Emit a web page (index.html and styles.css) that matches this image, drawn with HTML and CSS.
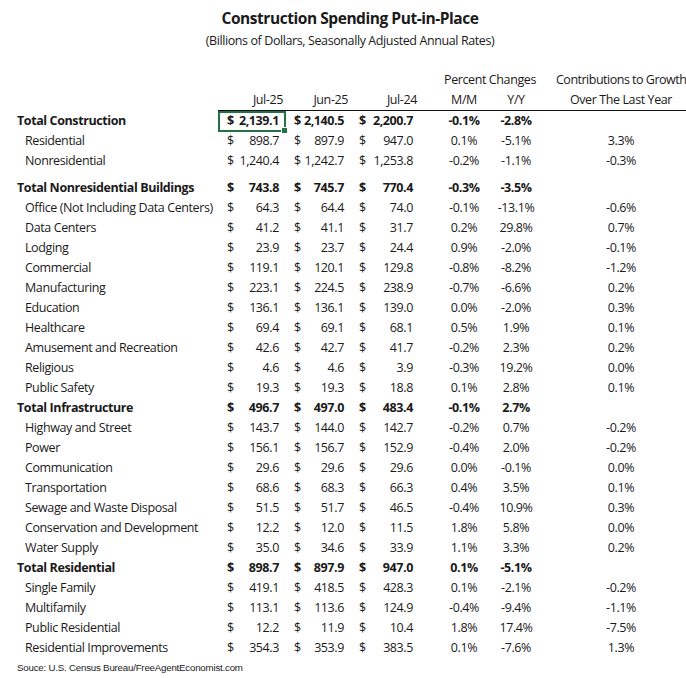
FILE: index.html
```html
<!DOCTYPE html>
<html>
<head>
<meta charset="utf-8">
<link rel="stylesheet" href="styles.css">
</head>
<body>
<h1 class="title">Construction Spending Put-in-Place</h1>
<p class="subtitle">(Billions of Dollars, Seasonally Adjusted Annual Rates)</p>
<table class="data">
  <colgroup>
    <col class="c-lbl"><col class="c-a"><col class="c-b"><col class="c-c"><col class="c-g1"><col class="c-mm"><col class="c-yy"><col class="c-g2"><col class="c-ct">
  </colgroup>
  <thead>
    <tr class="h1">
      <th></th><th></th><th></th><th></th><th></th>
      <th colspan="2" class="pc">Percent Changes</th>
      <th></th>
      <th class="ct-top">Contributions to Growth</th>
    </tr>
    <tr class="h2">
      <th class="nl"></th>
      <th class="hd">Jul-25</th><th class="hd">Jun-25</th><th class="hd">Jul-24</th>
      <th></th><th class="p">M/M</th><th class="p">Y/Y</th><th></th><th class="p">Over The Last Year</th>
    </tr>
  </thead>
  <tbody>
    <tr class="tot"><td class="lbl">Total Construction</td><td class="sel"><div class="m"><span>$</span><span>2,139.1</span></div></td><td><div class="m"><span>$</span><span>2,140.5</span></div></td><td><div class="m"><span>$</span><span>2,200.7</span></div></td><td></td><td class="p">-0.1%</td><td class="p">-2.8%</td><td></td><td class="p"></td></tr>
    <tr><td class="lbl">Residential</td><td><div class="m"><span>$</span><span>898.7</span></div></td><td><div class="m"><span>$</span><span>897.9</span></div></td><td><div class="m"><span>$</span><span>947.0</span></div></td><td></td><td class="p">0.1%</td><td class="p">-5.1%</td><td></td><td class="p">3.3%</td></tr>
    <tr><td class="lbl">Nonresidential</td><td><div class="m"><span>$</span><span>1,240.4</span></div></td><td><div class="m"><span>$</span><span>1,242.7</span></div></td><td><div class="m"><span>$</span><span>1,253.8</span></div></td><td></td><td class="p">-0.2%</td><td class="p">-1.1%</td><td></td><td class="p">-0.3%</td></tr>
    <tr class="spacer"><td colspan="9"></td></tr>
    <tr class="tot"><td class="lbl">Total Nonresidential Buildings</td><td><div class="m"><span>$</span><span>743.8</span></div></td><td><div class="m"><span>$</span><span>745.7</span></div></td><td><div class="m"><span>$</span><span>770.4</span></div></td><td></td><td class="p">-0.3%</td><td class="p">-3.5%</td><td></td><td class="p"></td></tr>
    <tr><td class="lbl">Office (Not Including Data Centers)</td><td><div class="m"><span>$</span><span>64.3</span></div></td><td><div class="m"><span>$</span><span>64.4</span></div></td><td><div class="m"><span>$</span><span>74.0</span></div></td><td></td><td class="p">-0.1%</td><td class="p">-13.1%</td><td></td><td class="p">-0.6%</td></tr>
    <tr><td class="lbl">Data Centers</td><td><div class="m"><span>$</span><span>41.2</span></div></td><td><div class="m"><span>$</span><span>41.1</span></div></td><td><div class="m"><span>$</span><span>31.7</span></div></td><td></td><td class="p">0.2%</td><td class="p">29.8%</td><td></td><td class="p">0.7%</td></tr>
    <tr><td class="lbl">Lodging</td><td><div class="m"><span>$</span><span>23.9</span></div></td><td><div class="m"><span>$</span><span>23.7</span></div></td><td><div class="m"><span>$</span><span>24.4</span></div></td><td></td><td class="p">0.9%</td><td class="p">-2.0%</td><td></td><td class="p">-0.1%</td></tr>
    <tr><td class="lbl">Commercial</td><td><div class="m"><span>$</span><span>119.1</span></div></td><td><div class="m"><span>$</span><span>120.1</span></div></td><td><div class="m"><span>$</span><span>129.8</span></div></td><td></td><td class="p">-0.8%</td><td class="p">-8.2%</td><td></td><td class="p">-1.2%</td></tr>
    <tr><td class="lbl">Manufacturing</td><td><div class="m"><span>$</span><span>223.1</span></div></td><td><div class="m"><span>$</span><span>224.5</span></div></td><td><div class="m"><span>$</span><span>238.9</span></div></td><td></td><td class="p">-0.7%</td><td class="p">-6.6%</td><td></td><td class="p">0.2%</td></tr>
    <tr><td class="lbl">Education</td><td><div class="m"><span>$</span><span>136.1</span></div></td><td><div class="m"><span>$</span><span>136.1</span></div></td><td><div class="m"><span>$</span><span>139.0</span></div></td><td></td><td class="p">0.0%</td><td class="p">-2.0%</td><td></td><td class="p">0.3%</td></tr>
    <tr><td class="lbl">Healthcare</td><td><div class="m"><span>$</span><span>69.4</span></div></td><td><div class="m"><span>$</span><span>69.1</span></div></td><td><div class="m"><span>$</span><span>68.1</span></div></td><td></td><td class="p">0.5%</td><td class="p">1.9%</td><td></td><td class="p">0.1%</td></tr>
    <tr><td class="lbl">Amusement and Recreation</td><td><div class="m"><span>$</span><span>42.6</span></div></td><td><div class="m"><span>$</span><span>42.7</span></div></td><td><div class="m"><span>$</span><span>41.7</span></div></td><td></td><td class="p">-0.2%</td><td class="p">2.3%</td><td></td><td class="p">0.2%</td></tr>
    <tr><td class="lbl">Religious</td><td><div class="m"><span>$</span><span>4.6</span></div></td><td><div class="m"><span>$</span><span>4.6</span></div></td><td><div class="m"><span>$</span><span>3.9</span></div></td><td></td><td class="p">-0.3%</td><td class="p">19.2%</td><td></td><td class="p">0.0%</td></tr>
    <tr><td class="lbl">Public Safety</td><td><div class="m"><span>$</span><span>19.3</span></div></td><td><div class="m"><span>$</span><span>19.3</span></div></td><td><div class="m"><span>$</span><span>18.8</span></div></td><td></td><td class="p">0.1%</td><td class="p">2.8%</td><td></td><td class="p">0.1%</td></tr>
    <tr class="tot"><td class="lbl">Total Infrastructure</td><td><div class="m"><span>$</span><span>496.7</span></div></td><td><div class="m"><span>$</span><span>497.0</span></div></td><td><div class="m"><span>$</span><span>483.4</span></div></td><td></td><td class="p">-0.1%</td><td class="p">2.7%</td><td></td><td class="p"></td></tr>
    <tr><td class="lbl">Highway and Street</td><td><div class="m"><span>$</span><span>143.7</span></div></td><td><div class="m"><span>$</span><span>144.0</span></div></td><td><div class="m"><span>$</span><span>142.7</span></div></td><td></td><td class="p">-0.2%</td><td class="p">0.7%</td><td></td><td class="p">-0.2%</td></tr>
    <tr><td class="lbl">Power</td><td><div class="m"><span>$</span><span>156.1</span></div></td><td><div class="m"><span>$</span><span>156.7</span></div></td><td><div class="m"><span>$</span><span>152.9</span></div></td><td></td><td class="p">-0.4%</td><td class="p">2.0%</td><td></td><td class="p">-0.2%</td></tr>
    <tr><td class="lbl">Communication</td><td><div class="m"><span>$</span><span>29.6</span></div></td><td><div class="m"><span>$</span><span>29.6</span></div></td><td><div class="m"><span>$</span><span>29.6</span></div></td><td></td><td class="p">0.0%</td><td class="p">-0.1%</td><td></td><td class="p">0.0%</td></tr>
    <tr><td class="lbl">Transportation</td><td><div class="m"><span>$</span><span>68.6</span></div></td><td><div class="m"><span>$</span><span>68.3</span></div></td><td><div class="m"><span>$</span><span>66.3</span></div></td><td></td><td class="p">0.4%</td><td class="p">3.5%</td><td></td><td class="p">0.1%</td></tr>
    <tr><td class="lbl">Sewage and Waste Disposal</td><td><div class="m"><span>$</span><span>51.5</span></div></td><td><div class="m"><span>$</span><span>51.7</span></div></td><td><div class="m"><span>$</span><span>46.5</span></div></td><td></td><td class="p">-0.4%</td><td class="p">10.9%</td><td></td><td class="p">0.3%</td></tr>
    <tr><td class="lbl">Conservation and Development</td><td><div class="m"><span>$</span><span>12.2</span></div></td><td><div class="m"><span>$</span><span>12.0</span></div></td><td><div class="m"><span>$</span><span>11.5</span></div></td><td></td><td class="p">1.8%</td><td class="p">5.8%</td><td></td><td class="p">0.0%</td></tr>
    <tr><td class="lbl">Water Supply</td><td><div class="m"><span>$</span><span>35.0</span></div></td><td><div class="m"><span>$</span><span>34.6</span></div></td><td><div class="m"><span>$</span><span>33.9</span></div></td><td></td><td class="p">1.1%</td><td class="p">3.3%</td><td></td><td class="p">0.2%</td></tr>
    <tr class="tot"><td class="lbl">Total Residential</td><td><div class="m"><span>$</span><span>898.7</span></div></td><td><div class="m"><span>$</span><span>897.9</span></div></td><td><div class="m"><span>$</span><span>947.0</span></div></td><td></td><td class="p">0.1%</td><td class="p">-5.1%</td><td></td><td class="p"></td></tr>
    <tr><td class="lbl">Single Family</td><td><div class="m"><span>$</span><span>419.1</span></div></td><td><div class="m"><span>$</span><span>418.5</span></div></td><td><div class="m"><span>$</span><span>428.3</span></div></td><td></td><td class="p">0.1%</td><td class="p">-2.1%</td><td></td><td class="p">-0.2%</td></tr>
    <tr><td class="lbl">Multifamily</td><td><div class="m"><span>$</span><span>113.1</span></div></td><td><div class="m"><span>$</span><span>113.6</span></div></td><td><div class="m"><span>$</span><span>124.9</span></div></td><td></td><td class="p">-0.4%</td><td class="p">-9.4%</td><td></td><td class="p">-1.1%</td></tr>
    <tr><td class="lbl">Public Residential</td><td><div class="m"><span>$</span><span>12.2</span></div></td><td><div class="m"><span>$</span><span>11.9</span></div></td><td><div class="m"><span>$</span><span>10.4</span></div></td><td></td><td class="p">1.8%</td><td class="p">17.4%</td><td></td><td class="p">-7.5%</td></tr>
    <tr><td class="lbl">Residential Improvements</td><td><div class="m"><span>$</span><span>354.3</span></div></td><td><div class="m"><span>$</span><span>353.9</span></div></td><td><div class="m"><span>$</span><span>383.5</span></div></td><td></td><td class="p">0.1%</td><td class="p">-7.6%</td><td></td><td class="p">1.3%</td></tr>
  </tbody>
</table>
<p class="src">Souce: U.S. Census Bureau/FreeAgentEconomist.com</p>
</body>
</html>
```

FILE: styles.css
```css
html, body {
  margin: 0;
  padding: 0;
  background: #ffffff;
}
body {
  width: 686px;
  height: 678px;
  overflow: hidden;
  font-family: "Open Sans", "DejaVu Sans", sans-serif;
  color: #1a1a1a;
}
.title {
  margin: 0;
  padding: 8px 0 0 14px;
  text-align: center;
  font-size: 15.5px;
  line-height: 20px;
  font-weight: 700;
  letter-spacing: -0.45px;
}
.subtitle {
  margin: 4px 0 0 0;
  padding-left: 14px;
  text-align: center;
  font-size: 12.5px;
  line-height: 18px;
  letter-spacing: -0.4px;
}
.data {
  margin: 20px 0 0 17px;
  width: 669px;
  table-layout: fixed;
  border-collapse: collapse;
  font-size: 12.5px;
  letter-spacing: -0.4px;
}
.c-lbl { width: 201px; }
.c-a { width: 67px; }
.c-b { width: 65px; }
.c-c { width: 69px; }
.c-g1 { width: 15px; }
.c-mm { width: 60px; }
.c-yy { width: 44px; }
.c-g2 { width: 18px; }
.c-ct { width: 130px; }
.data th, .data td {
  padding: 0;
  height: 20px;
  line-height: 20px;
  white-space: nowrap;
  font-weight: 400;
}
.data .h2 th {
  border-bottom: 1px solid #111;
}
.data .h2 th.nl {
  border-bottom: none;
}
.hd {
  text-align: right;
  padding-right: 2px !important;
}
.pc {
  text-align: center;
  padding-left: 8px !important;
}
.ct-top {
  text-align: left;
  overflow: visible;
  letter-spacing: -0.5px;
}
.p {
  text-align: center;
}
.lbl {
  padding-left: 8px !important;
}
.tot td {
  font-weight: 700;
}
.tot .lbl {
  padding-left: 0 !important;
}
.m {
  display: flex;
  justify-content: space-between;
  padding: 0 6px 0 9px;
}
.spacer td {
  height: 7px;
  line-height: 7px;
}
.sel {
  position: relative;
}
.sel::after {
  content: "";
  position: absolute;
  left: 0;
  top: 0;
  right: -1px;
  bottom: -1px;
  border: 2px solid #217346;
}
.sel::before {
  content: "";
  position: absolute;
  right: -3px;
  bottom: -3px;
  width: 5px;
  height: 5px;
  background: #217346;
  border: 1px solid #fff;
  z-index: 2;
}
.src {
  margin: 0 0 0 17px;
  font-family: "Liberation Sans", Arial, sans-serif;
  font-size: 9.7px;
  line-height: 20px;
  letter-spacing: -0.2px;
}
```
